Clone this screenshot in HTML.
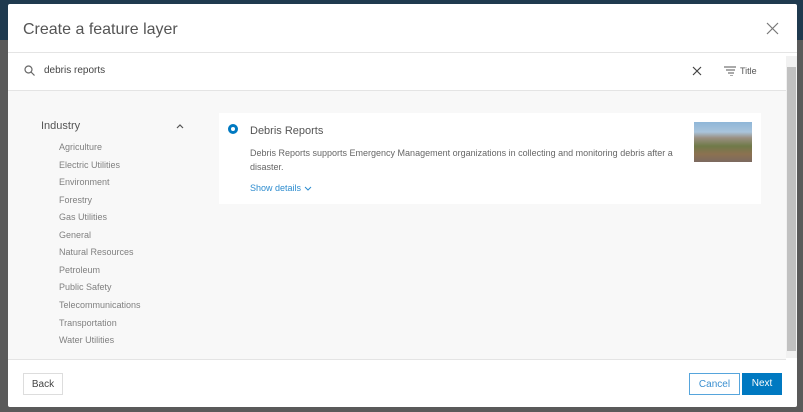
<!DOCTYPE html>
<html><head><style>
body{margin:0;width:803px;height:412px;background:#5a5a5a;position:relative;overflow:hidden;font-family:"Liberation Sans",sans-serif;}
.top{position:absolute;left:0;top:0;width:803px;height:40px;background:#1f3a4f}
.modal{position:absolute;left:8px;top:4px;width:789px;height:403px;background:#fff;border-radius:2px;overflow:hidden}
.abs{position:absolute}
.title{left:15px;top:17px;font-size:16px;color:#555}
.l1{left:0;top:48px;width:789px;height:1px;background:#e4e4e4}
.content{left:0;top:86px;width:778px;height:268px;background:#f8f8f8;border-top:1px solid #e4e4e4;border-bottom:1px solid #e4e4e4}
.sb{left:778px;top:52px;width:11px;height:302px;background:#f1f1f1}
.thumb{left:779px;top:63px;width:9px;height:284px;background:#c1c1c1}
.cat{font-size:9px;color:#808080;left:51px}
.card{left:211px;top:109px;width:542px;height:91px;background:#fff}
.btn{font-size:10px;height:22px;line-height:22px;text-align:center;box-sizing:border-box}
</style></head><body>
<div class="top"></div>
<div class="modal">
<div class="abs title">Create a feature layer</div>
<svg class="abs" style="left:758px;top:18px" width="13" height="13"><path d="M1 1L12 12M12 1L1 12" stroke="#777" stroke-width="1.2"/></svg>
<div class="abs l1"></div>
<svg class="abs" style="left:16px;top:61px" width="11" height="11"><circle cx="4.5" cy="4.5" r="3.5" fill="none" stroke="#666" stroke-width="1.2"/><path d="M7 7L10.5 10.5" stroke="#666" stroke-width="1.2"/></svg>
<div class="abs" style="left:36px;top:61px;font-size:10px;color:#444">debris reports</div>
<svg class="abs" style="left:684px;top:62px" width="10" height="10"><path d="M1 1L9 9M9 1L1 9" stroke="#444" stroke-width="1.2"/></svg>
<svg class="abs" style="left:716px;top:62px" width="12" height="10"><path d="M0 1H12M2 4H11M4 7H10M6 10H9" stroke="#555" stroke-width="1"/></svg>
<div class="abs" style="left:732px;top:62px;font-size:9px;color:#555">Title</div>
<div class="abs content"></div>
<div class="abs sb"></div><div class="abs thumb"></div>
<div class="abs" style="left:33px;top:116px;font-size:11px;color:#555">Industry</div>
<svg class="abs" style="left:168px;top:119px" width="8" height="6"><path d="M1 5L4 2L7 5" stroke="#555" fill="none" stroke-width="1.2"/></svg>
<div class="abs cat" style="top:138px">Agriculture</div>
<div class="abs cat" style="top:156px">Electric Utilities</div>
<div class="abs cat" style="top:173px">Environment</div>
<div class="abs cat" style="top:191px">Forestry</div>
<div class="abs cat" style="top:208px">Gas Utilities</div>
<div class="abs cat" style="top:226px">General</div>
<div class="abs cat" style="top:243px">Natural Resources</div>
<div class="abs cat" style="top:261px">Petroleum</div>
<div class="abs cat" style="top:278px">Public Safety</div>
<div class="abs cat" style="top:296px">Telecommunications</div>
<div class="abs cat" style="top:314px">Transportation</div>
<div class="abs cat" style="top:331px">Water Utilities</div>
<div class="abs card"></div>
<div class="abs" style="left:220px;top:120px;width:10px;height:10px;border-radius:50%;background:#0079c1"></div>
<div class="abs" style="left:223px;top:123px;width:4px;height:4px;border-radius:50%;background:#fff"></div>
<div class="abs" style="left:242px;top:121px;font-size:11px;color:#555">Debris Reports</div>
<div class="abs" style="left:242px;top:142px;width:440px;font-size:9px;line-height:14px;color:#666">Debris Reports supports Emergency Management organizations in collecting and monitoring debris after a disaster.</div>
<div class="abs" style="left:242px;top:179px;font-size:9px;color:#2d8ccf">Show details</div>
<svg class="abs" style="left:296px;top:182px" width="8" height="6"><path d="M1 1L4 4L7 1" stroke="#2d8ccf" fill="none"/></svg>
<div class="abs" style="left:686px;top:118px;width:58px;height:40px;background:linear-gradient(#8fb6d8 0,#a9c4db 25%,#9a8f80 40%,#6f7a48 60%,#8c7250 80%,#7c6a60 100%)"></div>
<div class="abs btn" style="left:15px;top:369px;width:40px;border:1px solid #ddd;color:#444">Back</div>
<div class="abs btn" style="left:681px;top:369px;width:51px;border:1px solid #56a5dc;color:#3a8fd0">Cancel</div>
<div class="abs btn" style="left:734px;top:369px;width:40px;background:#0079c1;color:#fff">Next</div>
</div>
</body></html>
